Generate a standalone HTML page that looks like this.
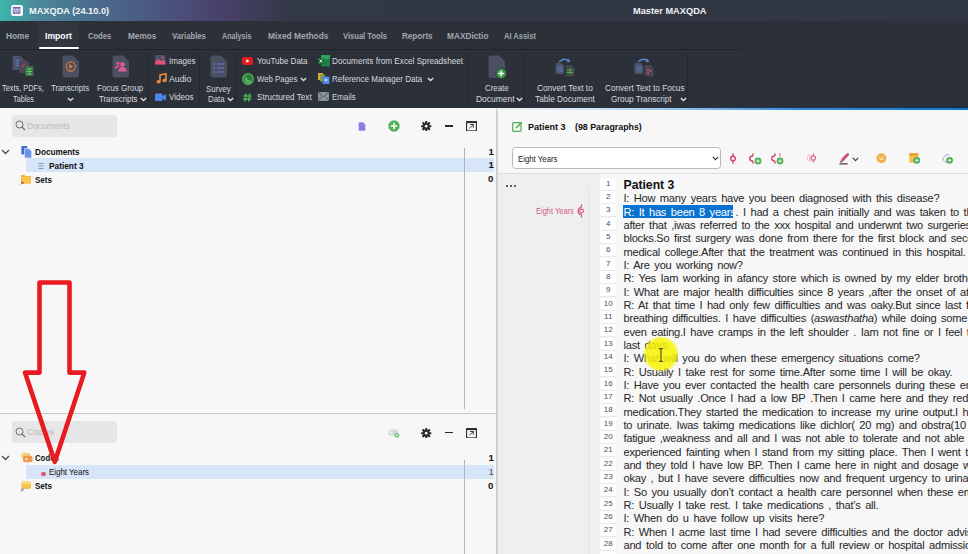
<!DOCTYPE html>
<html><head><meta charset="utf-8">
<style>
*{margin:0;padding:0;box-sizing:border-box}
html,body{width:968px;height:554px;overflow:hidden;background:#f6f6f6;font-family:"Liberation Sans",sans-serif}
.a{position:absolute}
.t{position:absolute;white-space:pre;font-family:"Liberation Sans",sans-serif}
#title{left:0;top:0;width:968px;height:21px;background:linear-gradient(90deg,#3db6a9 0px,#4a8a9a 35px,#4b6b8d 95px,#4a5a82 150px,#4b4873 195px,#473f66 230px,#3a3d52 265px,#333846 290px,#313643 968px)}
#tabs{left:0;top:21px;width:968px;height:28px;background:#2b3039}
#ribbon{left:0;top:49px;width:968px;height:59px;background:#2b3039}
.sep{position:absolute;width:1px;background:#22262e}
.dl{position:absolute;left:623.5px;white-space:pre;font-size:11.1px;line-height:13.333px;color:#262626;letter-spacing:-0.24px;word-spacing:1.76px}
.ln{position:absolute;left:600px;width:16.4px;height:13.333px;background:#fefefe;border-bottom:1.5px solid #e8e9eb;text-align:center;font-size:8px;line-height:12.5px;color:#45525f}
</style></head>
<body>
<div id="title" class="a"></div>
<div id="tabs" class="a"></div>
<div class="a" style="left:38px;top:22px;width:41px;height:25px;background:#31363f"></div>
<div class="a" style="left:39px;top:46.5px;width:40px;height:2.5px;background:#fff;border-radius:1.5px"></div>
<div id="ribbon" class="a"></div>
<div class="a" style="left:0;top:49px;width:737px;height:1px;background:#1e222a"></div>
<div class="a" style="left:737px;top:49px;width:123px;height:1px;background:#272b33"></div>
<!-- separators -->
<div class="sep" style="left:148px;top:54px;height:48px"></div>
<div class="sep" style="left:199px;top:54px;height:48px"></div>
<div class="sep" style="left:235px;top:54px;height:48px"></div>
<div class="sep" style="left:467px;top:54px;height:48px"></div>
<div class="sep" style="left:524px;top:54px;height:48px"></div>
<div class="sep" style="left:687px;top:54px;height:48px"></div>

<!-- title icon -->
<div class="a" style="left:11.2px;top:5px;width:11.5px;height:11px;background:#f4f4fa;border-radius:2px"></div>
<svg class="a" style="left:11.2px;top:5px" width="12" height="11" viewBox="0 0 12 11"><rect x="1.8" y="2.2" width="7.6" height="6.6" fill="#8d8ac4"/><path d="M1.8 2.6 h7.6" stroke="#5a578f" stroke-width="0.8"/><circle cx="3.4" cy="4.6" r="0.8" fill="#e6e8fb"/><circle cx="5.6" cy="4.6" r="0.8" fill="#e6e8fb"/><circle cx="7.8" cy="4.6" r="0.8" fill="#e6e8fb"/><circle cx="4.5" cy="6.5" r="0.8" fill="#d9dcf6"/><circle cx="6.8" cy="6.5" r="0.8" fill="#d9dcf6"/><path d="M3.2 8.8 v-1.2 M7.6 8.8 v-1.2" stroke="#4a4780" stroke-width="0.9"/></svg>

<!-- ribbon icons -->
<!-- Texts PDFs Tables -->
<svg class="a" style="left:12px;top:55px" width="24" height="23" viewBox="0 0 24 23">
  <path d="M1.5 1 h7 l3 3 v10 a1 1 0 0 1 -1 1 h-9 a1 1 0 0 1 -1 -1 v-12 a1 1 0 0 1 1 -1z" fill="#4b5468"/>
  <path d="M3.5 5.5h5 M3.5 8h5 M3.5 10.5h5" stroke="#5c7fd6" stroke-width="1"/>
  <path d="M8 5 h6 l3 3 v9 a1 1 0 0 1 -1 1 h-8 a1 1 0 0 1 -1 -1 v-11 a1 1 0 0 1 1 -1z" fill="#4e4656"/>
  <path d="M10 12 l3 -3" stroke="#a1465a" stroke-width="1.4"/>
  <rect x="13" y="11" width="8.5" height="10" rx="1" fill="#3d6a49"/>
  <path d="M14.5 14h5.5 M14.5 16.5h5.5 M14.5 19h5.5 M17.2 13v7" stroke="#5fcf6c" stroke-width="0.9"/>
</svg>
<!-- Transcripts -->
<svg class="a" style="left:61.5px;top:55px" width="18" height="23" viewBox="0 0 18 23">
  <path d="M3 0.5 h8 l6 6 v13.5 a2.5 2.5 0 0 1 -2.5 2.5 h-11.5 a2.5 2.5 0 0 1 -2.5 -2.5 v-17 a2.5 2.5 0 0 1 2.5 -2.5z" fill="#4b5060"/>
  <circle cx="8.8" cy="11.5" r="4.6" fill="none" stroke="#e07a35" stroke-width="1.1"/>
  <path d="M7.3 9 l3.6 2.5 l-3.6 2.5z" fill="#e9803a"/>
</svg>
<!-- Focus group -->
<svg class="a" style="left:111.5px;top:55px" width="18" height="23" viewBox="0 0 18 23">
  <path d="M3 0.5 h8 l6 6 v13.5 a2.5 2.5 0 0 1 -2.5 2.5 h-11.5 a2.5 2.5 0 0 1 -2.5 -2.5 v-17 a2.5 2.5 0 0 1 2.5 -2.5z" fill="#4b5060"/>
  <circle cx="5.8" cy="8.3" r="1.8" fill="#e0508f"/><path d="M2.5 14 q0.5 -3.5 3.3 -3.5 q1.5 0 2.2 1z" fill="#e0508f"/>
  <circle cx="10.5" cy="9.5" r="2.3" fill="#e35a98"/><path d="M6.3 16.5 q0.3 -4.5 4.2 -4.5 q3.9 0 4.2 4.5z" fill="#e35a98"/>
</svg>
<!-- Images -->
<svg class="a" style="left:155px;top:55px" width="11" height="10" viewBox="0 0 11 10">
  <rect x="0" y="0" width="10.5" height="9.5" rx="1" fill="#4b5162"/>
  <path d="M0 9.5 v-3 l3 -2.5 l3 2 l2 -1.5 l2.5 2 v3z" fill="#e2517c"/><circle cx="7.5" cy="2.5" r="1" fill="#e2517c"/>
</svg>
<!-- Audio -->
<svg class="a" style="left:155.5px;top:73px" width="11" height="11" viewBox="0 0 11 11">
  <path d="M4 8.5 V2 L10 0.8 V7.2" stroke="#e98a3f" stroke-width="1.6" fill="none"/>
  <ellipse cx="2.6" cy="8.7" rx="2.2" ry="1.8" fill="#e98a3f"/><ellipse cx="8.6" cy="7.5" rx="2.2" ry="1.8" fill="#e98a3f"/>
</svg>
<!-- Videos -->
<svg class="a" style="left:155px;top:92.5px" width="11" height="9" viewBox="0 0 11 9">
  <rect x="0" y="0.5" width="7.5" height="7.5" rx="1" fill="#4f86e8"/><path d="M7 3.5 L11 1 V7.8 L7 5.2z" fill="#4f86e8"/>
</svg>
<!-- Survey -->
<svg class="a" style="left:209.5px;top:55px" width="18" height="23" viewBox="0 0 18 23">
  <path d="M3 0.5 h8 l6 6 v13.5 a2.5 2.5 0 0 1 -2.5 2.5 h-11.5 a2.5 2.5 0 0 1 -2.5 -2.5 v-17 a2.5 2.5 0 0 1 2.5 -2.5z" fill="#4b5060"/>
  <path d="M7 9h7 M7 13h7 M7 17h7" stroke="#6c6fe0" stroke-width="1.2"/>
  <circle cx="4.2" cy="9" r="0.9" fill="none" stroke="#6c6fe0" stroke-width="0.6"/><circle cx="4.2" cy="13" r="0.9" fill="none" stroke="#6c6fe0" stroke-width="0.6"/><circle cx="4.2" cy="17" r="0.9" fill="none" stroke="#6c6fe0" stroke-width="0.6"/>
</svg>
<!-- YouTube -->
<svg class="a" style="left:242px;top:56.5px" width="11" height="8" viewBox="0 0 11 8">
  <rect x="0" y="0" width="11" height="8" rx="2" fill="#e01d1d"/><path d="M4.3 2.3 L7.5 4 L4.3 5.7z" fill="#fff"/>
</svg>
<!-- Web pages -->
<svg class="a" style="left:241.5px;top:73px" width="12" height="12" viewBox="0 0 12 12">
  <circle cx="6" cy="6" r="5.3" fill="#2f7a3a" stroke="#58b65f" stroke-width="1.2"/>
  <path d="M2.5 3.5 q2 0 2.5 2 q0.5 2 2.5 1.5 q2 0.5 1.5 2.5 l-2 1 q-3 0 -4 -3z" fill="#58b65f"/>
</svg>
<!-- # -->
<svg class="a" style="left:243px;top:92.5px" width="9" height="9" viewBox="0 0 9 9">
  <path d="M3 0.5 L2.2 8.5 M6.5 0.5 L5.7 8.5 M0.3 3 H8.7 M0 6 H8.4" stroke="#4fae5a" stroke-width="1.5"/>
</svg>
<!-- Excel -->
<svg class="a" style="left:317.5px;top:54.5px" width="12" height="12" viewBox="0 0 12 12">
  <rect x="3" y="0" width="9" height="11.5" rx="1" fill="#1e7f45"/><rect x="3" y="0" width="9" height="4" fill="#2fa35a"/>
  <rect x="0" y="3" width="6" height="6" rx="0.7" fill="#166b37"/><path d="M1.6 4.5 L4.4 7.5 M4.4 4.5 L1.6 7.5" stroke="#fff" stroke-width="0.8"/>
</svg>
<!-- Reference manager -->
<svg class="a" style="left:318px;top:73px" width="12" height="11" viewBox="0 0 12 11">
  <rect x="0" y="0" width="5" height="7" fill="#d4ad2c"/><rect x="2" y="1.5" width="5" height="7" fill="#8b9a3a"/>
  <rect x="4.5" y="3.5" width="7" height="7.5" rx="0.8" fill="#4f86e8"/><path d="M8 5.5 v3 M6.5 7 h3" stroke="#fff" stroke-width="0.8"/>
</svg>
<!-- Email -->
<svg class="a" style="left:318px;top:92px" width="11" height="9" viewBox="0 0 11 9">
  <rect x="0.5" y="0.5" width="10" height="8" fill="#8b96a3" stroke="#9aa4b0" stroke-width="0.6"/><path d="M0.5 0.5 L5.5 5 L10.5 0.5 M0.5 8.5 L4 4.5 M10.5 8.5 L7 4.5" stroke="#3c434e" stroke-width="0.8" fill="none"/>
</svg>
<!-- Create document -->
<svg class="a" style="left:488px;top:54.5px" width="20" height="25" viewBox="0 0 20 25">
  <path d="M3 0.5 h8 l6 6 v14 a2.5 2.5 0 0 1 -2.5 2.5 h-11.5 a2.5 2.5 0 0 1 -2.5 -2.5 v-17.5 a2.5 2.5 0 0 1 2.5 -2.5z" fill="#4b5060"/>
  <circle cx="13.2" cy="18.5" r="5.2" fill="#3f9a4b" stroke="#2b3039" stroke-width="0.8"/>
  <path d="M13.2 15.8 v5.4 M10.5 18.5 h5.4" stroke="#fff" stroke-width="1.5"/>
</svg>
<!-- Convert to table -->
<svg class="a" style="left:554.5px;top:56.5px" width="21" height="20" viewBox="0 0 21 20">
  <path d="M4 5 q5 -5 10 -1" stroke="#5d86cf" stroke-width="1.3" fill="none"/><path d="M13 1.5 l2.5 3 l-3.5 1z" fill="#5d86cf"/>
  <path d="M1.5 6 h5 l2.5 2.5 v7.5 a1 1 0 0 1 -1 1 h-6.5 a1 1 0 0 1 -1 -1 v-9 a1 1 0 0 1 1 -1z" fill="#4b5468"/>
  <path d="M2.5 10h5 M2.5 12h5 M2.5 14h5" stroke="#5c7fd6" stroke-width="0.8"/>
  <path d="M11.5 8 h5 l3 3 v7.5 a1 1 0 0 1 -1 1 h-7 a1 1 0 0 1 -1 -1 v-9.5 a1 1 0 0 1 1 -1z" fill="#3d4a45"/>
  <path d="M12 13h6 M12 15.5h6 M15 11.5v6" stroke="#55c062" stroke-width="0.8"/>
</svg>
<!-- Convert to focus -->
<svg class="a" style="left:633.5px;top:56.5px" width="21" height="20" viewBox="0 0 21 20">
  <path d="M4 5 q5 -5 10 -1" stroke="#5d86cf" stroke-width="1.3" fill="none"/><path d="M13 1.5 l2.5 3 l-3.5 1z" fill="#5d86cf"/>
  <path d="M1.5 6 h5 l2.5 2.5 v7.5 a1 1 0 0 1 -1 1 h-6.5 a1 1 0 0 1 -1 -1 v-9 a1 1 0 0 1 1 -1z" fill="#4b5468"/>
  <path d="M2.5 10h5 M2.5 12h5 M2.5 14h5" stroke="#5c7fd6" stroke-width="0.8"/>
  <path d="M11.5 8 h5 l3 3 v7.5 a1 1 0 0 1 -1 1 h-7 a1 1 0 0 1 -1 -1 v-9.5 a1 1 0 0 1 1 -1z" fill="#4a4550"/>
  <circle cx="14" cy="13" r="1" fill="#e0508f"/><path d="M12.5 16.5 q1.5 -3 3 0z" fill="#e0508f"/><circle cx="16.5" cy="14" r="0.9" fill="#e0508f"/>
</svg>
<!-- chevrons in ribbon -->
<svg class="a" style="left:67px;top:97px" width="7" height="5" viewBox="0 0 7 5"><path d="M0.8 0.9 L3.5 3.6 L6.2 0.9" stroke="#d9dbde" stroke-width="1.4" fill="none"/></svg>
<svg class="a" style="left:140px;top:97px" width="7" height="5" viewBox="0 0 7 5"><path d="M0.8 0.9 L3.5 3.6 L6.2 0.9" stroke="#d9dbde" stroke-width="1.4" fill="none"/></svg>
<svg class="a" style="left:227px;top:97px" width="7" height="5" viewBox="0 0 7 5"><path d="M0.8 0.9 L3.5 3.6 L6.2 0.9" stroke="#d9dbde" stroke-width="1.4" fill="none"/></svg>
<svg class="a" style="left:300px;top:77px" width="7" height="5" viewBox="0 0 7 5"><path d="M0.8 0.9 L3.5 3.6 L6.2 0.9" stroke="#d9dbde" stroke-width="1.4" fill="none"/></svg>
<svg class="a" style="left:427px;top:77px" width="7" height="5" viewBox="0 0 7 5"><path d="M0.8 0.9 L3.5 3.6 L6.2 0.9" stroke="#d9dbde" stroke-width="1.4" fill="none"/></svg>
<svg class="a" style="left:516px;top:97px" width="7" height="5" viewBox="0 0 7 5"><path d="M0.8 0.9 L3.5 3.6 L6.2 0.9" stroke="#d9dbde" stroke-width="1.4" fill="none"/></svg>
<svg class="a" style="left:679.5px;top:97px" width="7" height="5" viewBox="0 0 7 5"><path d="M0.8 0.9 L3.5 3.6 L6.2 0.9" stroke="#d9dbde" stroke-width="1.4" fill="none"/></svg>

<!-- ============ LEFT PANEL ============ -->
<div class="a" style="left:0;top:108px;width:496px;height:446px;background:#f7f7f7"></div>
<div class="a" style="left:496px;top:108px;width:2px;height:446px;background:#cfcfcf"></div>
<div class="a" style="left:0;top:412.5px;width:496px;height:1.2px;background:#c9c9c9"></div>
<!-- search boxes -->
<div class="a" style="left:12.2px;top:115px;width:104.7px;height:21.7px;background:#e6e6e6;border-radius:3.5px"></div>
<div class="a" style="left:12.2px;top:421.3px;width:104.6px;height:22px;background:#e6e6e6;border-radius:3.5px"></div>
<svg class="a" style="left:14.5px;top:120px" width="11" height="11" viewBox="0 0 11 11"><circle cx="4.5" cy="4.5" r="3.5" fill="none" stroke="#6f6f6f" stroke-width="1"/><path d="M7 7 L10 10" stroke="#6f6f6f" stroke-width="1.2"/></svg>
<svg class="a" style="left:14.5px;top:426.5px" width="11" height="11" viewBox="0 0 11 11"><circle cx="4.5" cy="4.5" r="3.5" fill="none" stroke="#6f6f6f" stroke-width="1"/><path d="M7 7 L10 10" stroke="#6f6f6f" stroke-width="1.2"/></svg>
<!-- highlight rows -->
<div class="a" style="left:26px;top:158px;width:468px;height:13.5px;background:#d6e5f7;border-radius:2px"></div>
<div class="a" style="left:26px;top:465.3px;width:468px;height:13.4px;background:#d6e5f7;border-radius:2px"></div>
<!-- count column line -->
<div class="a" style="left:464px;top:147.5px;width:1px;height:261px;background:#b4b4b4"></div>
<div class="a" style="left:464px;top:459.5px;width:1px;height:95px;background:#b4b4b4"></div>
<!-- tree chevrons -->
<svg class="a" style="left:1px;top:149px" width="9" height="6" viewBox="0 0 9 6"><path d="M1 1 L4.5 4.5 L8 1" stroke="#505050" stroke-width="1.4" fill="none"/></svg>
<svg class="a" style="left:1px;top:455px" width="9" height="6" viewBox="0 0 9 6"><path d="M1 1 L4.5 4.5 L8 1" stroke="#505050" stroke-width="1.4" fill="none"/></svg>
<!-- documents icon -->
<svg class="a" style="left:21px;top:146px" width="11" height="12" viewBox="0 0 11 12"><rect x="0.3" y="0" width="6" height="8.5" rx="0.8" fill="#3f6fd0"/><path d="M3.5 2.5 h4.5 l2.7 2.7 v6 a0.8 0.8 0 0 1 -0.8 0.8 h-5.6 a0.8 0.8 0 0 1 -0.8 -0.8z" fill="#6a95ea" stroke="#f7f7f7" stroke-width="0.6"/></svg>
<!-- patient doc icon -->
<svg class="a" style="left:37.5px;top:161.5px" width="6" height="8" viewBox="0 0 6 8"><path d="M0.5 1.5h5 M0.5 4h5 M0.5 6.5h5" stroke="#7d8fb3" stroke-width="0.9"/></svg>
<!-- sets folder -->
<svg class="a" style="left:20px;top:173px" width="12" height="12" viewBox="0 0 12 12"><path d="M1 2 h3.5 l1 1 h5.5 v7.5 h-10z" fill="#f1b53c"/><path d="M1 4 h10 v6.5 h-10z" fill="#f7c54d"/><path d="M0.5 11.5 L3 9 M1 9 h2 v2" stroke="#c0392b" stroke-width="0.8" fill="none"/></svg>
<svg class="a" style="left:20px;top:480px" width="12" height="12" viewBox="0 0 12 12"><rect x="1.5" y="1.5" width="9.5" height="7.5" rx="2" fill="#f3c04e"/><rect x="1.5" y="1.5" width="9.5" height="3" rx="1.5" fill="#f8d77a"/><path d="M0.5 11.5 L3 9 M1 9 h2 v2" stroke="#7b5ea7" stroke-width="0.8" fill="none"/></svg>
<!-- codes icon -->
<svg class="a" style="left:21px;top:452px" width="12" height="11" viewBox="0 0 12 11"><rect x="0.3" y="0.8" width="9" height="6" rx="2" fill="#f6cf86"/><rect x="2" y="3.8" width="9.5" height="6.5" rx="2" fill="#f09a50"/><circle cx="5.3" cy="7" r="1.1" fill="#fde9d6"/></svg>
<!-- red dot -->
<div class="a" style="left:41.3px;top:471.7px;width:4.7px;height:4.7px;border-radius:50%;background:#e0566a"></div>
<!-- pane toolbar icons (docs) -->
<svg class="a" style="left:357.5px;top:122px" width="8" height="9" viewBox="0 0 8 9"><path d="M1.5 0.3 h3.5 l2.3 2.3 v5.4 a0.8 0.8 0 0 1 -0.8 0.8 h-5 a0.8 0.8 0 0 1 -0.8 -0.8 v-6.9 a0.8 0.8 0 0 1 0.8 -0.8z" fill="#8f7ce8"/><path d="M0.4 1.2 v6.8" stroke="#cfc6f3" stroke-width="0.7"/></svg>
<svg class="a" style="left:387.5px;top:119.8px" width="12" height="12" viewBox="0 0 12 12"><circle cx="6" cy="6" r="5.7" fill="#4fb356"/><path d="M6 2.8 v6.4 M2.8 6 h6.4" stroke="#fff" stroke-width="1.6"/></svg>
<svg class="a" style="left:421.3px;top:121px" width="10.4" height="10.4" viewBox="0 0 11 11"><g fill="#2a2a2a"><circle cx="5.5" cy="5.5" r="3.6"/><rect x="4.4" y="0" width="2.2" height="11" rx="0.5"/><rect x="0" y="4.4" width="11" height="2.2" rx="0.5"/><rect x="4.4" y="0" width="2.2" height="11" rx="0.5" transform="rotate(45 5.5 5.5)"/><rect x="4.4" y="0" width="2.2" height="11" rx="0.5" transform="rotate(-45 5.5 5.5)"/></g><circle cx="5.5" cy="5.5" r="1.5" fill="#f7f7f7"/></svg>
<div class="a" style="left:444.8px;top:125.2px;width:8.4px;height:1.8px;background:#2a2a2a"></div>
<svg class="a" style="left:465.5px;top:120.6px" width="11" height="10.5" viewBox="0 0 11 10.5"><rect x="0.6" y="0.6" width="9.8" height="9.3" fill="none" stroke="#2a2a2a" stroke-width="1.1"/><path d="M0.6 1.4 h9.8" stroke="#2a2a2a" stroke-width="1.4"/><path d="M3.3 7.5 L7.3 3.5 M4 3.5 h3.3 v3.3" stroke="#2a2a2a" stroke-width="0.9" fill="none"/></svg>
<!-- pane toolbar icons (codes) -->
<svg class="a" style="left:388px;top:428.5px" width="12" height="9" viewBox="0 0 12 9"><rect x="0.5" y="0.5" width="9.5" height="6" rx="2" fill="#d6d6d6"/><circle cx="3" cy="3.5" r="1.2" fill="#f2f2f2"/><circle cx="8.8" cy="6.3" r="2.4" fill="#6cc070"/><path d="M8.8 5.1 v2.4 M7.6 6.3 h2.4" stroke="#f2f2f2" stroke-width="0.7"/></svg>
<svg class="a" style="left:421.3px;top:427.6px" width="10.4" height="10.4" viewBox="0 0 11 11"><g fill="#2a2a2a"><circle cx="5.5" cy="5.5" r="3.6"/><rect x="4.4" y="0" width="2.2" height="11" rx="0.5"/><rect x="0" y="4.4" width="11" height="2.2" rx="0.5"/><rect x="4.4" y="0" width="2.2" height="11" rx="0.5" transform="rotate(45 5.5 5.5)"/><rect x="4.4" y="0" width="2.2" height="11" rx="0.5" transform="rotate(-45 5.5 5.5)"/></g><circle cx="5.5" cy="5.5" r="1.5" fill="#f7f7f7"/></svg>
<div class="a" style="left:444.8px;top:431.6px;width:8.4px;height:1.8px;background:#2a2a2a"></div>
<svg class="a" style="left:465.5px;top:427.5px" width="11" height="10.5" viewBox="0 0 11 10.5"><rect x="0.6" y="0.6" width="9.8" height="9.3" fill="none" stroke="#2a2a2a" stroke-width="1.1"/><path d="M0.6 1.4 h9.8" stroke="#2a2a2a" stroke-width="1.4"/><path d="M3.3 7.5 L7.3 3.5 M4 3.5 h3.3 v3.3" stroke="#2a2a2a" stroke-width="0.9" fill="none"/></svg>

<!-- ============ RIGHT PANEL ============ -->
<div class="a" style="left:498px;top:108px;width:470px;height:446px;background:#f7f7f7"></div>
<div class="a" style="left:497px;top:107px;width:471px;height:1px;background:linear-gradient(90deg,#2b3039 0px,#2b3039 120px,#1d3552 300px,#0f2d50 471px)"></div>
<div class="a" style="left:497px;top:108px;width:471px;height:2px;background:linear-gradient(90deg,#eef2f6 0px,#d5e6f5 90px,#8dbde9 190px,#3b8ad8 300px,#1a74c9 471px)"></div>
<div class="a" style="left:497px;top:110px;width:471px;height:1px;background:linear-gradient(90deg,#f7f7f7 0px,#f2fbfd 300px,#effdff 471px)"></div>
<!-- edit icon -->
<svg class="a" style="left:511.5px;top:120.5px" width="11" height="11" viewBox="0 0 11 11"><rect x="0.7" y="1.7" width="8.3" height="8.6" rx="1" fill="none" stroke="#4cae56" stroke-width="1.2"/><path d="M4 7 L9.8 1.2" stroke="#4cae56" stroke-width="1.6"/></svg>
<!-- dropdown -->
<div class="a" style="left:512px;top:147.2px;width:209.4px;height:22px;background:#fff;border:1px solid #b9b9b9;border-radius:3.5px"></div>
<svg class="a" style="left:712px;top:156px" width="7" height="5" viewBox="0 0 7 5"><path d="M0.8 0.8 L3.5 3.6 L6.2 0.8" stroke="#333" stroke-width="1.1" fill="none"/></svg>
<!-- toolbar icons -->
<svg class="a" style="left:729px;top:152.5px" width="8" height="11" viewBox="0 0 8 11"><circle cx="4" cy="5.5" r="2.3" fill="none" stroke="#cf4a6a" stroke-width="1.4"/><path d="M4 0.3 v2.8 M4 7.9 v2.8" stroke="#cf4a6a" stroke-width="1.4"/></svg>
<svg class="a" style="left:747px;top:152.5px" width="16" height="12" viewBox="0 0 16 12"><path d="M6 0.3 v2.7 M6 8 v2.7" stroke="#cf4a6a" stroke-width="1.3"/><path d="M6 3 q-3.3 0 -3.3 2.5 q0 2.5 3.3 2.5" stroke="#cf4a6a" stroke-width="1.4" fill="none"/><circle cx="11" cy="8" r="3.4" fill="#4fae57"/><path d="M11 6.2 v3.6 M9.2 8 h3.6" stroke="#e9f7ea" stroke-width="1"/></svg>
<svg class="a" style="left:769px;top:152.5px" width="16" height="12" viewBox="0 0 16 12"><path d="M6 0.3 v2.7 M6 8 v2.7 M10.8 0.3 v1.4 M10.8 2.6 v1" stroke="#cf4a6a" stroke-width="1.3"/><path d="M6 3 q-3.3 0 -3.3 2.5 q0 2.5 3.3 2.5" stroke="#cf4a6a" stroke-width="1.4" fill="none"/><circle cx="11" cy="8" r="3.4" fill="#4fae57"/><path d="M11 6.2 v3.6 M9.2 8 h3.6" stroke="#e9f7ea" stroke-width="1"/></svg>
<svg class="a" style="left:806px;top:153px" width="11" height="10" viewBox="0 0 11 10"><path d="M2.5 1 q-2.5 4 0 8 M4.5 1 q-2.5 4 0 8" stroke="#f3b6c4" stroke-width="0.9" fill="none"/><circle cx="7.3" cy="5" r="2.2" fill="none" stroke="#df6f8b" stroke-width="1.3"/><path d="M7.3 0.4 v2.2 M7.3 7.4 v2.2" stroke="#df6f8b" stroke-width="1.3"/></svg>
<svg class="a" style="left:838.5px;top:152px" width="11" height="13" viewBox="0 0 11 13"><path d="M1.8 9.3 L2.8 6.6 L7.6 1.6 q1.3 -0.9 2.1 0 q0.8 0.9 -0.1 2 L4.7 8.7 z" fill="#c9507a"/><path d="M0.8 10.4 l1 -1.6 l2.3 1.2z" fill="#5b2a3a"/><path d="M0.5 11.9 h8.2" stroke="#5b2a3a" stroke-width="1.2"/></svg>
<svg class="a" style="left:852px;top:156.5px" width="7" height="5" viewBox="0 0 7 5"><path d="M0.8 0.9 L3.5 3.6 L6.2 0.9" stroke="#444" stroke-width="1.3" fill="none"/></svg>
<svg class="a" style="left:875.5px;top:153px" width="11" height="10.5" viewBox="0 0 11 10.5"><circle cx="5.4" cy="5.2" r="5" fill="#f0b64e"/><path d="M2.7 5.2 q2.7 3.6 5.4 0z" fill="#fbe7bf"/><path d="M2.9 4 q0.8 -1 1.6 0 M6.3 4 q0.8 -1 1.6 0" stroke="#fbe7bf" stroke-width="0.8" fill="none"/></svg>
<svg class="a" style="left:908.5px;top:153px" width="12" height="11" viewBox="0 0 12 11"><rect x="0.3" y="0.3" width="9" height="9.5" rx="0.7" fill="#f4c24a"/><rect x="0.3" y="0.3" width="9" height="2.3" fill="#dda12f"/><circle cx="7.8" cy="7.3" r="3.4" fill="#4fae57"/><path d="M7.8 5.5 v3.6 M6 7.3 h3.6" stroke="#e9f7ea" stroke-width="1"/></svg>
<svg class="a" style="left:941.5px;top:153px" width="12" height="11" viewBox="0 0 12 11"><path d="M1.6 7.6 q-1.5 -1.6 0 -3.1 l2.3 -2.4 q1.6 -1.5 3.2 0" stroke="#8e9fd3" stroke-width="1" fill="none"/><path d="M2.5 8.6 q1.6 1.4 3.2 0" stroke="#8e9fd3" stroke-width="1" fill="none"/><circle cx="7.6" cy="7.3" r="3.4" fill="#4fae57"/><path d="M7.6 5.5 v3.6 M5.8 7.3 h3.6" stroke="#e9f7ea" stroke-width="1"/></svg>
<!-- doc area separator -->
<div class="a" style="left:498px;top:173px;width:470px;height:1px;background:#dcdcdc"></div>
<!-- margin -->
<div class="a" style="left:498px;top:174px;width:102px;height:380px;background:#efefef"></div>
<div class="a" style="left:587.5px;top:188px;width:1px;height:366px;background:#e2e2e2"></div>
<!-- dots -->
<div class="a" style="left:505.5px;top:184.5px;width:2.2px;height:2.2px;background:#333;border-radius:50%"></div>
<div class="a" style="left:509.5px;top:184.5px;width:2.2px;height:2.2px;background:#333;border-radius:50%"></div>
<div class="a" style="left:513.5px;top:184.5px;width:2.2px;height:2.2px;background:#333;border-radius:50%"></div>
<!-- code marker -->
<svg class="a" style="left:577px;top:204px" width="8" height="14" viewBox="0 0 8 14"><path d="M4.5 0.5 v3 M4.5 10.5 v3" stroke="#d0607e" stroke-width="1.3"/><path d="M4.5 3.5 q-3.3 0 -3.3 3.5 q0 3.5 3.3 3.5" stroke="#d0607e" stroke-width="1.4" fill="none"/><circle cx="4.6" cy="7" r="1.9" fill="none" stroke="#d0607e" stroke-width="1.1"/></svg>
<!-- line number column -->
<div class="ln" style="top:177.50px">1</div>
<div class="ln" style="top:190.83px">2</div>
<div class="ln" style="top:204.17px">3</div>
<div class="ln" style="top:217.50px">4</div>
<div class="ln" style="top:230.83px">5</div>
<div class="ln" style="top:244.17px">6</div>
<div class="ln" style="top:257.50px">7</div>
<div class="ln" style="top:270.83px">8</div>
<div class="ln" style="top:284.17px">9</div>
<div class="ln" style="top:297.50px">10</div>
<div class="ln" style="top:310.83px">11</div>
<div class="ln" style="top:324.17px">12</div>
<div class="ln" style="top:337.50px">13</div>
<div class="ln" style="top:350.83px">14</div>
<div class="ln" style="top:364.17px">15</div>
<div class="ln" style="top:377.50px">16</div>
<div class="ln" style="top:390.83px">17</div>
<div class="ln" style="top:404.17px">18</div>
<div class="ln" style="top:417.50px">19</div>
<div class="ln" style="top:430.83px">20</div>
<div class="ln" style="top:444.17px">21</div>
<div class="ln" style="top:457.50px">22</div>
<div class="ln" style="top:470.83px">23</div>
<div class="ln" style="top:484.17px">24</div>
<div class="ln" style="top:497.50px">25</div>
<div class="ln" style="top:510.83px">26</div>
<div class="ln" style="top:524.17px">27</div>
<div class="ln" style="top:537.50px">28</div>
<div class="ln" style="top:550.83px">29</div>
<!-- text selection -->
<div class="a" style="left:622.6px;top:204.5px;width:110px;height:13.3px;background:#0a73d1"></div>
<!-- doc lines -->
<div class="a" style="left:623.5px;top:178.5px;font-size:12.2px;line-height:13.333px;font-weight:700;color:#111;white-space:pre">Patient 3</div>
<div id="doc">
<div class="dl" style="top:192.20px">I: How many years have you been diagnosed with this disease?</div>
<div class="dl" style="top:205.53px"><span style="color:#fff">R: It has been 8 years</span>. I had a chest pain initially and was taken to the xxx hospital. There</div>
<div class="dl" style="top:218.87px">after that ,iwas referred to the xxx hospital and underwnt two surgeries for the</div>
<div class="dl" style="top:232.20px">blocks.So first surgery was done from there for the first block and second one</div>
<div class="dl" style="top:245.53px">medical college.After that the treatment was continued in this hospital.</div>
<div class="dl" style="top:258.87px">I: Are you working now?</div>
<div class="dl" style="top:272.20px">R: Yes Iam working in afancy store which is owned by my elder brother.</div>
<div class="dl" style="top:285.53px">I: What are major health difficulties since 8 years ,after the onset of attack?</div>
<div class="dl" style="top:298.87px">R: At that time I had only few difficulties and was oaky.But since last few months</div>
<div class="dl" style="top:312.20px">breathing difficulties. I have difficulties (<i>aswasthatha</i>) while doing some work</div>
<div class="dl" style="top:325.53px">even eating.I have cramps in the left shoulder . Iam not fine or I feel tired</div>
<div class="dl" style="top:338.87px">last days.</div>
<div class="dl" style="top:352.20px">I: What will you do when these emergency situations come?</div>
<div class="dl" style="top:365.53px">R: Usually I take rest for some time.After some time I will be okay.</div>
<div class="dl" style="top:378.87px">I: Have you ever contacted the health care personnels during these emergency</div>
<div class="dl" style="top:392.20px">R: Not usually .Once I had a low BP .Then I came here and they reduced</div>
<div class="dl" style="top:405.53px">medication.They started the medication to increase my urine output.I had</div>
<div class="dl" style="top:418.87px">to urinate. Iwas takimg medications like dichlor( 20 mg) and obstra(10 mg)</div>
<div class="dl" style="top:432.20px">fatigue ,weakness and all and I was not able to tolerate and not able to</div>
<div class="dl" style="top:445.53px">experienced fainting when I stand from my sitting place. Then I went to</div>
<div class="dl" style="top:458.87px">and they told I have low BP. Then I came here in night and dosage was</div>
<div class="dl" style="top:472.20px">okay , but I have severe difficulties now and frequent urgency to urinate.</div>
<div class="dl" style="top:485.53px">I: So you usually don’t contact a health care personnel when these emergency</div>
<div class="dl" style="top:498.87px">R: Usually I take rest. I take medications , that’s all.</div>
<div class="dl" style="top:512.20px">I: When do u have follow up visits here?</div>
<div class="dl" style="top:525.53px">R: When I acme last time I had severe difficulties and the doctor advised</div>
<div class="dl" style="top:538.87px">and told to come after one month for a full review or hospital admission.</div>
<div class="dl" style="top:552.20px">I: Apart from these physical difficulties, do you have any other problems</div>
</div>

<div class="t" style="left:28.7px;top:0.5px;font-size:9.6px;line-height:20px;color:#f2f4f6;font-weight:700;transform:scaleX(0.9609);transform-origin:0 0;">MAXQDA (24.10.0)</div>
<div class="t" style="left:633.0px;top:0.6px;font-size:9.6px;line-height:20px;color:#eef0f2;font-weight:700;transform:scaleX(0.9641);transform-origin:0 0;">Master MAXQDA</div>
<div class="t" style="left:5.8px;top:25.6px;font-size:9.4px;line-height:20px;color:#a3a7ae;font-weight:700;transform:scaleX(0.8869);transform-origin:0 0;">Home</div>
<div class="t" style="left:44.8px;top:25.6px;font-size:9.4px;line-height:20px;color:#ffffff;font-weight:700;transform:scaleX(0.9221);transform-origin:0 0;">Import</div>
<div class="t" style="left:88.2px;top:25.6px;font-size:9.4px;line-height:20px;color:#a3a7ae;font-weight:700;transform:scaleX(0.8096);transform-origin:0 0;">Codes</div>
<div class="t" style="left:127.9px;top:25.6px;font-size:9.4px;line-height:20px;color:#a3a7ae;font-weight:700;transform:scaleX(0.8758);transform-origin:0 0;">Memos</div>
<div class="t" style="left:172.1px;top:25.6px;font-size:9.4px;line-height:20px;color:#a3a7ae;font-weight:700;transform:scaleX(0.8231);transform-origin:0 0;">Variables</div>
<div class="t" style="left:222.2px;top:25.6px;font-size:9.4px;line-height:20px;color:#a3a7ae;font-weight:700;transform:scaleX(0.7650);transform-origin:0 0;">Analysis</div>
<div class="t" style="left:267.7px;top:25.6px;font-size:9.4px;line-height:20px;color:#a3a7ae;font-weight:700;transform:scaleX(0.8934);transform-origin:0 0;">Mixed Methods</div>
<div class="t" style="left:343.0px;top:25.6px;font-size:9.4px;line-height:20px;color:#a3a7ae;font-weight:700;transform:scaleX(0.8094);transform-origin:0 0;">Visual Tools</div>
<div class="t" style="left:402.0px;top:25.6px;font-size:9.4px;line-height:20px;color:#a3a7ae;font-weight:700;transform:scaleX(0.8639);transform-origin:0 0;">Reports</div>
<div class="t" style="left:446.9px;top:25.6px;font-size:9.4px;line-height:20px;color:#a3a7ae;font-weight:700;transform:scaleX(0.8853);transform-origin:0 0;">MAXDictio</div>
<div class="t" style="left:503.9px;top:25.6px;font-size:9.4px;line-height:20px;color:#a3a7ae;font-weight:700;transform:scaleX(0.8019);transform-origin:0 0;">AI Assist</div>
<div class="t" style="left:2.0px;top:78.4px;font-size:9.2px;line-height:20px;color:#d9dbde;transform:scaleX(0.8026);transform-origin:0 0;">Texts, PDFs,</div>
<div class="t" style="left:13.2px;top:89.1px;font-size:9.2px;line-height:20px;color:#d9dbde;transform:scaleX(0.7906);transform-origin:0 0;">Tables</div>
<div class="t" style="left:51.2px;top:78.4px;font-size:9.2px;line-height:20px;color:#d9dbde;transform:scaleX(0.8449);transform-origin:0 0;">Transcripts</div>
<div class="t" style="left:96.7px;top:78.4px;font-size:9.2px;line-height:20px;color:#d9dbde;transform:scaleX(0.8718);transform-origin:0 0;">Focus Group</div>
<div class="t" style="left:99.0px;top:89.1px;font-size:9.2px;line-height:20px;color:#d9dbde;transform:scaleX(0.8538);transform-origin:0 0;">Transcripts</div>
<div class="t" style="left:169.4px;top:51.0px;font-size:9.2px;line-height:20px;color:#d9dbde;transform:scaleX(0.8792);transform-origin:0 0;">Images</div>
<div class="t" style="left:169.4px;top:69.1px;font-size:9.2px;line-height:20px;color:#d9dbde;transform:scaleX(0.9532);transform-origin:0 0;">Audio</div>
<div class="t" style="left:169.4px;top:87.3px;font-size:9.2px;line-height:20px;color:#d9dbde;transform:scaleX(0.8805);transform-origin:0 0;">Videos</div>
<div class="t" style="left:205.9px;top:78.5px;font-size:9.2px;line-height:20px;color:#d9dbde;transform:scaleX(0.8634);transform-origin:0 0;">Survey</div>
<div class="t" style="left:208.4px;top:89.1px;font-size:9.2px;line-height:20px;color:#d9dbde;transform:scaleX(0.8496);transform-origin:0 0;">Data</div>
<div class="t" style="left:256.5px;top:50.8px;font-size:9.2px;line-height:20px;color:#d9dbde;transform:scaleX(0.8698);transform-origin:0 0;">YouTube Data</div>
<div class="t" style="left:256.5px;top:69.1px;font-size:9.2px;line-height:20px;color:#d9dbde;transform:scaleX(0.8515);transform-origin:0 0;">Web Pages</div>
<div class="t" style="left:256.7px;top:87.3px;font-size:9.2px;line-height:20px;color:#d9dbde;transform:scaleX(0.8876);transform-origin:0 0;">Structured Text</div>
<div class="t" style="left:332.4px;top:50.9px;font-size:9.2px;line-height:20px;color:#d9dbde;transform:scaleX(0.8914);transform-origin:0 0;">Documents from Excel Spreadsheet</div>
<div class="t" style="left:332.4px;top:69.1px;font-size:9.2px;line-height:20px;color:#d9dbde;transform:scaleX(0.8733);transform-origin:0 0;">Reference Manager Data</div>
<div class="t" style="left:332.4px;top:87.3px;font-size:9.2px;line-height:20px;color:#d9dbde;transform:scaleX(0.8558);transform-origin:0 0;">Emails</div>
<div class="t" style="left:485.4px;top:78.3px;font-size:9.2px;line-height:20px;color:#d9dbde;transform:scaleX(0.8558);transform-origin:0 0;">Create</div>
<div class="t" style="left:475.5px;top:89.0px;font-size:9.2px;line-height:20px;color:#d9dbde;transform:scaleX(0.9194);transform-origin:0 0;">Document</div>
<div class="t" style="left:537.4px;top:77.9px;font-size:9.2px;line-height:20px;color:#d9dbde;transform:scaleX(0.9055);transform-origin:0 0;">Convert Text to</div>
<div class="t" style="left:535.3px;top:89.0px;font-size:9.2px;line-height:20px;color:#d9dbde;transform:scaleX(0.9022);transform-origin:0 0;">Table Document</div>
<div class="t" style="left:604.5px;top:77.9px;font-size:9.2px;line-height:20px;color:#d9dbde;transform:scaleX(0.8912);transform-origin:0 0;">Convert Text to Focus</div>
<div class="t" style="left:611.4px;top:89.0px;font-size:9.2px;line-height:20px;color:#d9dbde;transform:scaleX(0.8857);transform-origin:0 0;">Group Transcript</div>
<div class="t" style="left:26.8px;top:116.0px;font-size:9.6px;line-height:20px;color:#b9b9b9;transform:scaleX(0.8860);transform-origin:0 0;">Documents</div>
<div class="t" style="left:35.4px;top:141.7px;font-size:9.6px;line-height:20px;color:#111;font-weight:700;transform:scaleX(0.8536);transform-origin:0 0;">Documents</div>
<div class="t" style="left:49.0px;top:156.0px;font-size:9.6px;line-height:20px;color:#111;font-weight:700;transform:scaleX(0.8650);transform-origin:0 0;">Patient 3</div>
<div class="t" style="left:35.0px;top:169.6px;font-size:9.6px;line-height:20px;color:#111;font-weight:700;transform:scaleX(0.8389);transform-origin:0 0;">Sets</div>
<div class="t" style="left:488.5px;top:141.7px;font-size:9.6px;line-height:20px;color:#111;font-weight:700;">1</div>
<div class="t" style="left:488.5px;top:155.4px;font-size:9.6px;line-height:20px;color:#111;font-weight:700;">1</div>
<div class="t" style="left:488.0px;top:169.4px;font-size:9.6px;line-height:20px;color:#111;font-weight:700;">0</div>
<div class="t" style="left:26.8px;top:422.3px;font-size:9.6px;line-height:20px;color:#b9b9b9;transform:scaleX(0.9735);transform-origin:0 0;">Codes</div>
<div class="t" style="left:35.4px;top:447.6px;font-size:9.6px;line-height:20px;color:#111;font-weight:700;transform:scaleX(0.8115);transform-origin:0 0;">Codes</div>
<div class="t" style="left:49.0px;top:462.0px;font-size:9.6px;line-height:20px;color:#111;transform:scaleX(0.8239);transform-origin:0 0;">Eight Years</div>
<div class="t" style="left:35.0px;top:476.3px;font-size:9.6px;line-height:20px;color:#111;font-weight:700;transform:scaleX(0.8389);transform-origin:0 0;">Sets</div>
<div class="t" style="left:488.5px;top:448.0px;font-size:9.6px;line-height:20px;color:#111;font-weight:700;">1</div>
<div class="t" style="left:488.5px;top:462.3px;font-size:9.6px;line-height:20px;color:#555;">1</div>
<div class="t" style="left:488.0px;top:475.8px;font-size:9.6px;line-height:20px;color:#111;font-weight:700;">0</div>
<div class="t" style="left:528.4px;top:117.2px;font-size:9.6px;line-height:20px;color:#111;font-weight:700;transform:scaleX(0.9400);transform-origin:0 0;">Patient 3</div>
<div class="t" style="left:575.4px;top:117.2px;font-size:9.6px;line-height:20px;color:#111;font-weight:700;transform:scaleX(0.9212);transform-origin:0 0;">(98 Paragraphs)</div>
<div class="t" style="left:518.4px;top:149.1px;font-size:9.4px;line-height:20px;color:#222;transform:scaleX(0.8327);transform-origin:0 0;">Eight Years</div>
<div class="t" style="left:535.7px;top:201.3px;font-size:8.6px;line-height:20px;color:#d0607e;transform:scaleX(0.8693);transform-origin:0 0;">Eight Years</div>

<!-- yellow cursor highlight -->
<div class="a" style="left:642.5px;top:336px;width:36px;height:36px;border-radius:50%;background:radial-gradient(circle closest-side,rgba(249,245,0,0.86) 0%,rgba(249,245,0,0.84) 82%,rgba(249,245,0,0.35) 95%,rgba(249,245,0,0) 100%)"></div>
<svg class="a" style="left:656.5px;top:347.5px" width="8" height="14" viewBox="0 0 8 14"><path d="M2 0.7 h4 M4 0.7 v12.6 M2 13.3 h4" stroke="#222" stroke-width="0.9" fill="none"/></svg>

<!-- red arrow -->
<svg class="a" style="left:0;top:0" width="968" height="554" viewBox="0 0 968 554">
  <path d="M39.5 282.5 H69.5 V372.6 H84.3 L54.8 461.8 L25 372.6 H39.5 Z" fill="none" stroke="#e81a22" stroke-width="4.6" stroke-linejoin="round"/>
</svg>
</body></html>
